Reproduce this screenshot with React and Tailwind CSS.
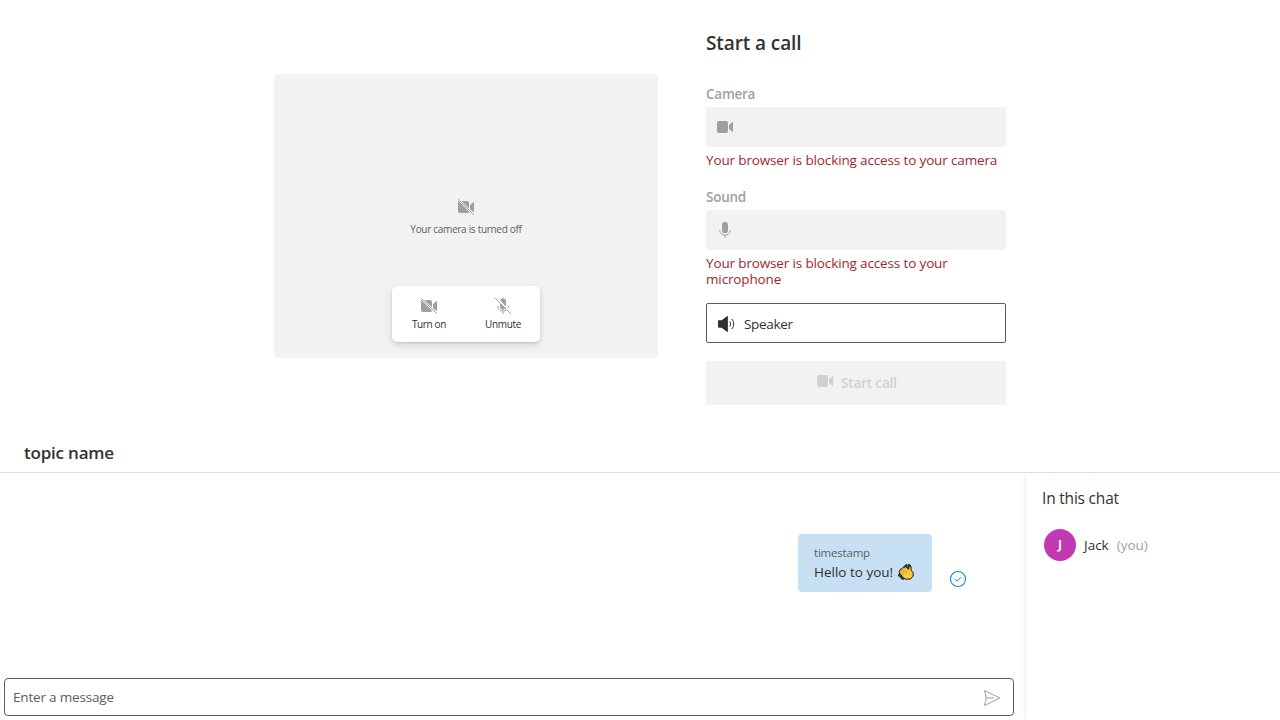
import React from "react";

function Video({ className = "" }) {
  return (
    <svg viewBox="0 0 18 18" className={"h-[18px] w-[18px] shrink-0 " + className} fill="currentColor">
      <rect x="1" y="3" width="11" height="12" rx="2" />
      <path d="M13 7.2 16.1 4.2c.4-.3.9-.1.9.3v9c0 .4-.5.6-.9.3L13 10.8z" />
    </svg>
  );
}

function VideoOff({ className = "" }) {
  return (
    <svg viewBox="0 0 18 18" className={"h-[18px] w-[18px] shrink-0 " + className} fill="currentColor">
      <path d="M1 2.6 12 13.6a2 2 0 0 1-1.4 1.4H3a2 2 0 0 1-2-2zM4.4 3H10a2 2 0 0 1 2 2v5.6zM13 7.2 16.1 4.2c.4-.3.9-.1.9.3v9c0 .4-.5.6-.9.3L13 11.2z" />
      <path d="m1.2 1.2 15.6 15.6" stroke="currentColor" strokeWidth="1" />
    </svg>
  );
}

function Mic({ className = "" }) {
  return (
    <svg viewBox="0 0 18 18" className={"h-[18px] w-[18px] shrink-0 " + className} fill="none" stroke="currentColor">
      <rect x="6" y="1" width="6" height="11" rx="2.6" fill="currentColor" stroke="none" />
      <path d="M3.7 9v.5a5.3 4.6 0 0 0 10.6 0V9M9 14.2V17" strokeWidth="1" />
    </svg>
  );
}

function MicOff({ className = "" }) {
  return (
    <svg viewBox="0 0 18 18" className={"h-[18px] w-[18px] shrink-0 " + className} fill="none" stroke="currentColor">
      <path d="M6 6.2 11.3 11.5A3 3 0 0 1 6 9zM6.2 3.2A3 3 0 0 1 12 4v5.8z" fill="currentColor" stroke="none" />
      <path d="M3.7 9v.5a5.3 4.6 0 0 0 8.6 3.5M14.3 9v.5c0 .6-.2 1.2-.5 1.8M9 14.2V17M1.2 1.2l15.6 15.6" strokeWidth="1" />
    </svg>
  );
}

function Speaker() {
  return (
    <svg viewBox="0 0 18 18" className="h-[18px] w-[18px] shrink-0 text-[#323130]" fill="none" stroke="currentColor">
      <path d="M1 5.3h3.6L10 1.2c.4-.3.9-.1.9.4v14.8c0 .5-.5.7-.9.4l-5.4-4.1H2a1 1 0 0 1-1-1z" fill="currentColor" stroke="none" />
      <path d="M12.8 6.3a4.7 4.7 0 0 1 0 5.4M14.9 4a7.7 7.7 0 0 1 0 10" strokeWidth="1" />
    </svg>
  );
}

function Clap() {
  return (
    <svg viewBox="0 0 18 18" className="h-[18px] w-[18px] shrink-0" strokeLinejoin="round" strokeLinecap="round">
      <path d="M7 3.6 9 1.4l1.6.9 1.5-1 1.5 1.2.4 2.2-4 1.4zM2.6 10.4 1.3 12.2l.9 1.4 1.5.3.5 1.8 1.8.6 3-1.2z" fill="#285066" stroke="#18242c" strokeWidth="1" />
      <path d="M2.2 9.6c-.8-1 0-2 .9-1.8-.5-1.3.7-2.2 1.7-1.6-.2-1.3 1.1-2 2-1.3.3-1.1 1.6-1.5 2.5-.6l2.2 1.9.5-2.1c.4-1.3 2.1-.9 2.1.4v2.7l2 2.4v3.6l-2.8 2.9H8.7l-2.4-1.3z" fill="#ffc83d" stroke="#171717" strokeWidth="1" />
      <path d="M4.2 8.2 6.6 10.6M5.6 6.8 8.5 9.7M7.5 5.8l2.7 2.7M4 10.5l2 2" fill="none" stroke="#b98222" strokeWidth=".7" />
    </svg>
  );
}

function Label({ children }) {
  return <div className="h-5 text-[13.5px] leading-5 font-semibold tracking-[-0.25px] text-[#a19f9d]">{children}</div>;
}

function ErrorText({ children }) {
  return <div className="text-[13.5px] leading-4 tracking-[-0.14px] text-[#a4262c]">{children}</div>;
}

export default function App() {
  return (
    <div className="flex h-[720px] w-[1280px] flex-col overflow-hidden bg-white font-['Open_Sans',sans-serif] text-[#323130]">
      <section className="flex h-[432px] shrink-0 gap-12 pl-[274px]">
        <div className="mt-[74px] flex h-[284px] w-96 flex-col items-center rounded-[3px] bg-[#f3f2f1] pt-[124px]">
          <VideoOff className="text-[#a19f9d]" />
          <div className="mt-[5px] text-[10px] leading-4 tracking-[-0.3px] whitespace-nowrap text-[#605e5c]">Your camera is turned off</div>
          <div className="mt-[49px] flex h-14 w-[148px] rounded-[5px] bg-white shadow-[0_3px_7px_rgba(0,0,0,0.13),0_1px_2px_rgba(0,0,0,0.11)]">
            <div className="flex w-[74px] flex-col items-center pt-[11px]">
              <VideoOff className="text-[#a19f9d]" />
              <div className="mt-px text-[10px] leading-4 tracking-[-0.35px] whitespace-nowrap">Turn on</div>
            </div>
            <div className="flex w-[74px] flex-col items-center pt-[11px]">
              <MicOff className="text-[#a19f9d]" />
              <div className="mt-px text-[10px] leading-4 tracking-[-0.3px] whitespace-nowrap">Unmute</div>
            </div>
          </div>
        </div>
        <div className="flex w-[300px] flex-col pt-[29px]">
          <h1 className="h-7 text-[19px] leading-7 font-semibold tracking-[-0.1px]">Start a call</h1>
          <div className="mt-[27px]"><Label>Camera</Label></div>
          <div className="mt-[3px] flex h-10 items-center rounded-[2px] bg-[#f3f2f1] pl-[10px] text-[#a19f9d]"><Video /></div>
          <div className="mt-[5px]"><ErrorText>Your browser is blocking access to your camera</ErrorText></div>
          <div className="mt-[19px]"><Label>Sound</Label></div>
          <div className="mt-[3px] flex h-10 items-center rounded-[2px] bg-[#f3f2f1] pl-[10px] text-[#a19f9d]"><Mic /></div>
          <div className="mt-[5px]"><ErrorText>Your browser is blocking access to your microphone</ErrorText></div>
          <div className="mt-4 flex h-10 items-center gap-[9px] rounded-[2px] border border-[#605e5c] pt-0.5 pl-[10px]">
            <Speaker />
            <span className="text-[13.5px] leading-5 tracking-[-0.3px]">Speaker</span>
          </div>
          <div className="mt-[18px] flex h-11 items-center gap-[7px] rounded-[2px] bg-[#f3f2f1] pl-[110px] text-[#d2d0ce]">
            <Video className="mb-1" />
            <span className="text-[13.5px] leading-5 font-semibold tracking-[-0.15px]">Start call</span>
          </div>
        </div>
      </section>
      <header className="flex h-[41px] shrink-0 items-center border-b border-[#dddcda] pt-px pl-6">
        <h2 className="text-[17px] leading-6 font-semibold tracking-[-0.2px]">topic name</h2>
      </header>
      <main className="flex h-[247px]">
        <section className="flex w-[1026px] flex-col">
          <div className="flex flex-1 items-start justify-end gap-[17px] pt-[61px] pr-[59px]">
            <div className="h-[58px] w-[134px] rounded-[4px] bg-[#c7e0f4] pt-[11px] pl-4">
              <div className="text-[11.5px] leading-4 tracking-[-0.2px] text-[#605e5c]">timestamp</div>
              <div className="mt-px flex h-5 items-center gap-1 text-[13.5px] leading-5">
                <span className="whitespace-nowrap">Hello to you!</span>
                <Clap />
              </div>
            </div>
            <svg viewBox="0 0 18 18" className="mt-9 h-[18px] w-[18px] shrink-0" fill="none" stroke="#1683d8">
              <circle cx="9" cy="9" r="7.5" strokeWidth="1.1" />
              <path d="m5.8 9 2.2 2.2 4-4" strokeWidth="1" />
            </svg>
          </div>
          <div className="mr-3 mb-1 ml-1 flex h-[38px] items-center justify-between rounded-[4px] border border-[#605e5c] pr-3 pl-2">
            <span className="text-[13.5px] leading-5 tracking-[-0.18px] text-[#605e5c]">Enter a message</span>
            <svg viewBox="0 0 18 18" className="mt-0.5 h-[18px] w-[18px]" fill="none" stroke="#a19f9d" strokeLinejoin="round">
              <path d="M1.5 1.5 16.8 9 1.5 16.5 3.3 9zM3.3 9H11" strokeWidth="1" />
            </svg>
          </div>
        </section>
        <aside className="w-[254px] pt-[13px] pl-4 shadow-[0_1px_4px_rgba(0,0,0,0.12)] [clip-path:inset(0_0_0_-4px)]">
          <h3 className="text-[15.5px] leading-6 tracking-[-0.2px]">In this chat</h3>
          <div className="mt-[19px] ml-0.5 flex h-8 items-center text-[13.5px]">
            <div className="flex h-8 w-8 items-center justify-center rounded-full bg-[#c239b3] text-xs font-bold text-white">J</div>
            <span className="ml-2">Jack</span>
            <span className="ml-2 text-[#a19f9d]">(you)</span>
          </div>
        </aside>
      </main>
    </div>
  );
}
